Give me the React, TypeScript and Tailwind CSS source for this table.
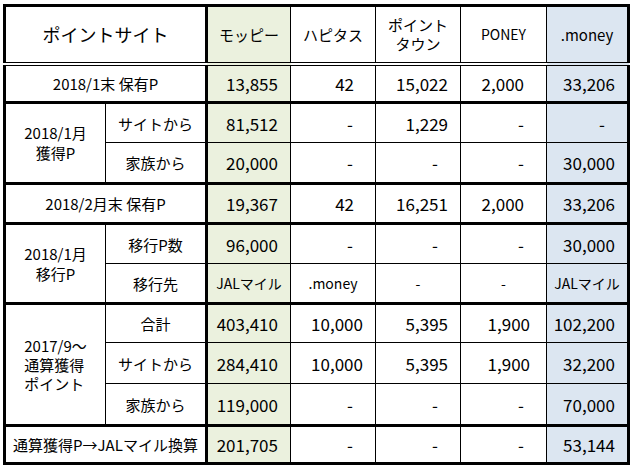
import clsx from "clsx"

const cell = "border border-black p-0 align-middle"
const green = "bg-[#ebf1de]"
const blue = "bg-[#dce6f1]"

const pad: Record<string, string> = {
  "-": "pr-[22px]",
  "42": "pr-[21px]",
  "2,000": "pr-[22px]",
  "1,900": "pr-[16px]",
}

interface ValuesProps {
  values: string[]
  top?: boolean
  centered?: boolean
}

function Values({ values, top, centered }: ValuesProps) {
  return (
    <>
      {values.map((v, i) => (
        <td
          key={i}
          className={clsx(
            cell,
            "leading-none",
            top && "border-t-[3px]",
            i === 0 && "border-l-[3px]",
            i === 0 && green,
            i === 4 && blue,
            centered ? "text-center text-[14px]" : "text-right text-[17px]",
            !centered && (pad[v] ?? "pr-[12px]")
          )}
        >
          {v}
        </td>
      ))}
    </>
  )
}

export default function App() {
  const head = clsx(cell, "font-normal text-center border-b-[4px] [border-bottom-style:double]")

  return (
    <div className="w-[634px] h-[467px] bg-white pt-[4px] pl-[3px] text-black font-['Noto_Sans_CJK_JP','Noto_Sans',sans-serif]">
      <table className="w-[627px] table-fixed border-collapse border-[3px] border-black">
        <colgroup>
          <col className="w-[101px]" />
          <col className="w-[101px]" />
          <col className="w-[84px]" />
          <col className="w-[85px]" />
          <col className="w-[85px]" />
          <col className="w-[86px]" />
          <col className="w-[82px]" />
        </colgroup>
        <thead>
          <tr className="h-[58px]">
            <th colSpan={2} className={clsx(head, "text-[18px] leading-none")}>
              ポイントサイト
            </th>
            <th className={clsx(head, green, "border-l-[3px] text-[15px] leading-none")}>モッピー</th>
            <th className={clsx(head, "text-[15px] leading-none")}>ハピタス</th>
            <th className={clsx(head, "text-[15px] leading-[19px]")}>
              ポイント
              <br />
              タウン
            </th>
            <th className={clsx(head, "text-[14px] leading-none")}>PONEY</th>
            <th className={clsx(head, blue, "text-[15px] leading-none")}>.money</th>
          </tr>
        </thead>
        <tbody>
          <tr className="h-[39px]">
            <td colSpan={2} className={clsx(cell, "text-center text-[15px] leading-none")}>
              2018/1末 保有P
            </td>
            <Values values={["13,855", "42", "15,022", "2,000", "33,206"]} />
          </tr>

          {/* 獲得 */}
          <tr className="h-[40px]">
            <td rowSpan={2} className={clsx(cell, "border-t-[3px] text-center text-[15px] leading-[20px]")}>
              2018/1月
              <br />
              獲得P
            </td>
            <td className={clsx(cell, "border-t-[3px] text-center text-[15px] leading-none")}>サイトから</td>
            <Values top values={["81,512", "-", "1,229", "-", "-"]} />
          </tr>
          <tr className="h-[41px]">
            <td className={clsx(cell, "text-center text-[15px] leading-none")}>家族から</td>
            <Values values={["20,000", "-", "-", "-", "30,000"]} />
          </tr>

          <tr className="h-[40px]">
            <td colSpan={2} className={clsx(cell, "border-t-[3px] text-center text-[15px] leading-none")}>
              2018/2月末 保有P
            </td>
            <Values top values={["19,367", "42", "16,251", "2,000", "33,206"]} />
          </tr>

          {/* 移行 */}
          <tr className="h-[40px]">
            <td rowSpan={2} className={clsx(cell, "border-t-[3px] text-center text-[15px] leading-[20px]")}>
              2018/1月
              <br />
              移行P
            </td>
            <td className={clsx(cell, "border-t-[3px] text-center text-[15px] leading-none")}>移行P数</td>
            <Values top values={["96,000", "-", "-", "-", "30,000"]} />
          </tr>
          <tr className="h-[40px]">
            <td className={clsx(cell, "text-center text-[15px] leading-none")}>移行先</td>
            <Values centered values={["JALマイル", ".money", "-", "-", "JALマイル"]} />
          </tr>

          {/* 通算 */}
          <tr className="h-[39px]">
            <td rowSpan={3} className={clsx(cell, "border-t-[3px] text-[15px] leading-[19px]")}>
              <div className="flex justify-center">
                <div className="text-left">
                  2017/9〜
                  <br />
                  通算獲得
                  <br />
                  ポイント
                </div>
              </div>
            </td>
            <td className={clsx(cell, "border-t-[3px] text-center text-[15px] leading-none")}>合計</td>
            <Values top values={["403,410", "10,000", "5,395", "1,900", "102,200"]} />
          </tr>
          <tr className="h-[41px]">
            <td className={clsx(cell, "text-center text-[15px] leading-none")}>サイトから</td>
            <Values values={["284,410", "10,000", "5,395", "1,900", "32,200"]} />
          </tr>
          <tr className="h-[42px]">
            <td className={clsx(cell, "text-center text-[15px] leading-none")}>家族から</td>
            <Values values={["119,000", "-", "-", "-", "70,000"]} />
          </tr>

          <tr className="h-[38px]">
            <td colSpan={2} className={clsx(cell, "border-t-[3px] text-center text-[15px] leading-none")}>
              通算獲得P→JALマイル換算
            </td>
            <Values top values={["201,705", "-", "-", "-", "53,144"]} />
          </tr>
        </tbody>
      </table>
    </div>
  )
}
